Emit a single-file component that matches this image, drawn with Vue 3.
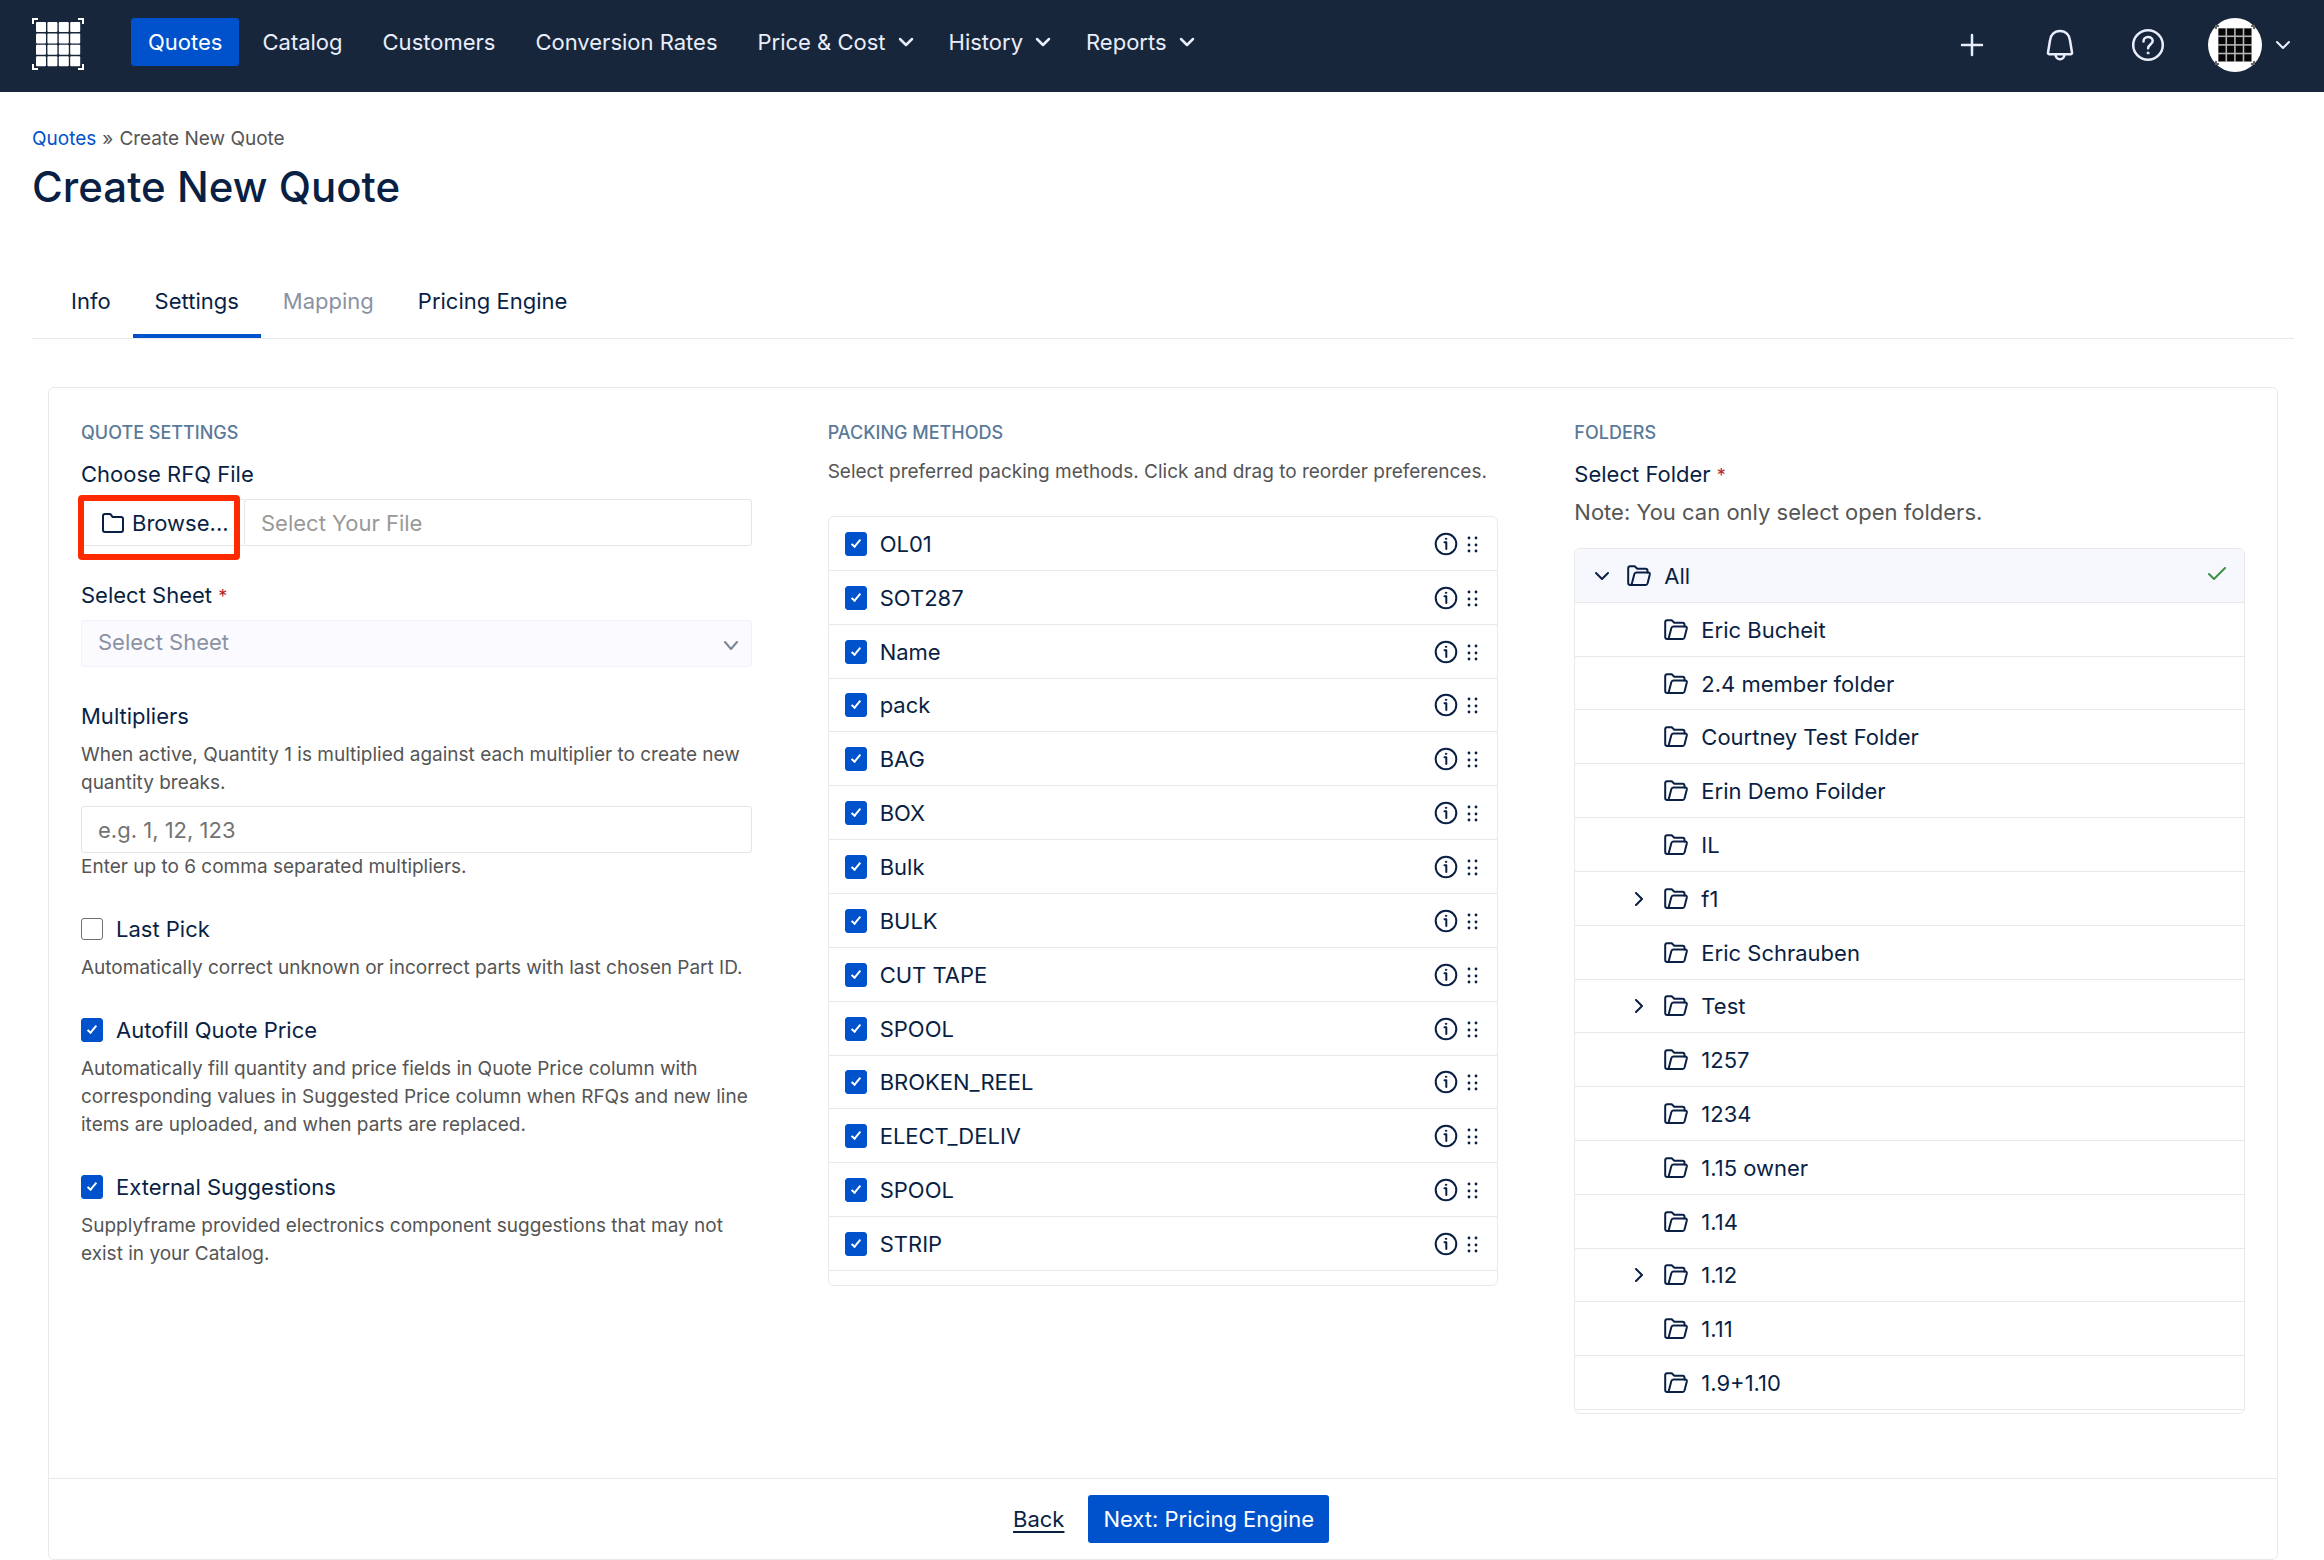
<script setup>
import { ref } from 'vue'

const navLinks = [
  { label: 'Quotes', active: true },
  { label: 'Catalog' },
  { label: 'Customers' },
  { label: 'Conversion Rates' },
  { label: 'Price & Cost', menu: true },
  { label: 'History', menu: true },
  { label: 'Reports', menu: true },
]

const tabs = [
  { label: 'Info' },
  { label: 'Settings', active: true },
  { label: 'Mapping', disabled: true },
  { label: 'Pricing Engine' },
]

const options = ref([
  {
    id: 'last-pick',
    label: 'Last Pick',
    checked: false,
    help: 'Automatically correct unknown or incorrect parts with last chosen Part ID.',
  },
  {
    id: 'autofill',
    label: 'Autofill Quote Price',
    checked: true,
    help: 'Automatically fill quantity and price fields in Quote Price column with corresponding values in Suggested Price column when RFQs and new line items are uploaded, and when parts are replaced.',
  },
  {
    id: 'external',
    label: 'External Suggestions',
    checked: true,
    help: 'Supplyframe provided electronics component suggestions that may not exist in your Catalog.',
  },
])

const packing = ref(
  [
    'OL01', 'SOT287', 'Name', 'pack', 'BAG', 'BOX', 'Bulk', 'BULK', 'CUT TAPE',
    'SPOOL', 'BROKEN_REEL', 'ELECT_DELIV', 'SPOOL', 'STRIP',
  ].map((name) => ({ name, checked: true }))
)

const folders = [
  { name: 'Eric Bucheit' },
  { name: '2.4 member folder' },
  { name: 'Courtney Test Folder' },
  { name: 'Erin Demo Foilder' },
  { name: 'IL' },
  { name: 'f1', expandable: true },
  { name: 'Eric Schrauben' },
  { name: 'Test', expandable: true },
  { name: '1257' },
  { name: '1234' },
  { name: '1.15 owner' },
  { name: '1.14' },
  { name: '1.12', expandable: true },
  { name: '1.11' },
  { name: '1.9+1.10' },
]

const cells = [0, 1, 2, 3]
</script>

<template>
  <div class="app">
    <header class="topbar">
      <a class="logo" href="#" aria-label="Home">
        <svg width="52" height="52" viewBox="0 0 52 52">
          <g fill="#fff">
            <template v-for="r in cells" :key="r">
              <rect v-for="c in cells" :key="c" :x="4 + c * 11.4" :y="4 + r * 11.4" width="10" height="10" rx="1" />
            </template>
          </g>
          <g fill="none" stroke="#fff" stroke-width="2">
            <path d="M1 6V1h5M46 1h5v5M51 46v5h-5M6 51H1v-5" />
          </g>
        </svg>
      </a>
      <nav class="nav">
        <a v-for="l in navLinks" :key="l.label" href="#" :class="['nav-link', { active: l.active, 'has-menu': l.menu }]">
          {{ l.label }}
          <svg v-if="l.menu" width="16" height="10" viewBox="0 0 16 10" class="line-icon bold">
            <path d="M2 2l6 6 6-6" />
          </svg>
        </a>
      </nav>
      <div class="tools">
        <button type="button" class="tool" aria-label="Add">
          <svg width="32" height="34" viewBox="0 0 32 34" class="line-icon bold"><path d="M16 7v20M6 17h20" /></svg>
        </button>
        <button type="button" class="tool" aria-label="Notifications">
          <svg width="32" height="34" viewBox="0 0 32 34" class="line-icon bold">
            <path d="M16 3c-5.600 0-9.600 4-10 9.500L4 24.500c-.1 1 .4 1.700 1.400 1.700h21.200c1 0 1.500-.7 1.400-1.700l-2-12C25.600 7 21.600 3 16 3z" />
            <path d="M11.500 26.500c.3 3 2 4.700 4.500 4.700s4.200-1.700 4.500-4.700" />
          </svg>
        </button>
        <button type="button" class="tool" aria-label="Help">
          <svg width="32" height="34" viewBox="0 0 32 34" class="line-icon bold">
            <circle cx="16" cy="17" r="14.800" />
            <path d="M11.500 13.500c0-2.700 2-4.500 4.600-4.500 2.700 0 4.600 1.700 4.600 4.100 0 3.400-4.600 3.600-4.600 7.200" />
            <circle cx="16" cy="25" r="1" fill="currentColor" stroke-width="1" />
          </svg>
        </button>
        <button type="button" class="account" aria-label="Account">
          <svg width="54" height="54" viewBox="0 0 54 54">
            <circle cx="27" cy="27" r="27" fill="#fff" />
            <rect x="10" y="10" width="34" height="34" fill="#b5b5b5" />
            <template v-for="r in cells" :key="r">
              <rect v-for="c in cells" :key="c" :x="10.500 + c * 8.600" :y="10.500 + r * 8.600" width="7" height="7" fill="#050505" />
            </template>
            <path d="M8 11V8h3M43 8h3v3M46 43v3h-3M11 46H8v-3" fill="none" stroke="#666" stroke-width="2" />
          </svg>
          <svg width="14" height="10" viewBox="0 0 14 10" class="line-icon"><path d="M1 2l6 6 6-6" /></svg>
        </button>
      </div>
    </header>

    <main class="page">
      <nav class="breadcrumb" aria-label="Breadcrumb">
        <a href="#">Quotes</a><span>»</span><span>Create New Quote</span>
      </nav>
      <h1>Create New Quote</h1>

      <div class="tabs" role="tablist">
        <button
          v-for="t in tabs"
          :key="t.label"
          type="button"
          role="tab"
          :disabled="t.disabled"
          :aria-selected="!!t.active"
          :class="['tab', { active: t.active }]"
        >{{ t.label }}</button>
      </div>

      <form class="card" @submit.prevent>
        <div class="columns">
          <section>
            <h2>Quote Settings</h2>
            <div class="fields">
              <div class="field">
                <label for="rfq-file" class="label">Choose RFQ File</label>
                <div class="file-row">
                  <button type="button" class="browse">
                    <svg width="22" height="20" viewBox="0 0 22 20" class="line-icon">
                      <path d="M1 3.200C1 2 1.800 1 3 1h4.500c.7 0 1.200.3 1.600.9L10.500 4H19c1.200 0 2 .9 2 2v10.800c0 1.200-.8 2.200-2 2.200H3c-1.200 0-2-1-2-2.200z" />
                    </svg>
                    Browse...
                  </button>
                  <input id="rfq-file" type="text" class="input file-name" placeholder="Select Your File" readonly />
                  <span class="highlight" aria-hidden="true"></span>
                </div>
              </div>

              <div class="field">
                <label for="sheet" class="label">Select Sheet <span class="required">*</span></label>
                <div class="select-wrap">
                  <select id="sheet" class="input select" disabled>
                    <option>Select Sheet</option>
                  </select>
                  <svg width="14" height="10" viewBox="0 0 14 10" class="line-icon select-arrow"><path d="M1 1l6 7 6-7" /></svg>
                </div>
              </div>

              <div class="field">
                <label for="multipliers" class="label">Multipliers</label>
                <p class="help">When active, Quantity 1 is multiplied against each multiplier to create new quantity breaks.</p>
                <div>
                  <input id="multipliers" type="text" class="input" placeholder="e.g. 1, 12, 123" />
                  <p class="help">Enter up to 6 comma separated multipliers.</p>
                </div>
              </div>
            </div>

            <div class="options">
              <div v-for="o in options" :key="o.id" class="field">
                <label class="check-label">
                  <input v-model="o.checked" type="checkbox" class="check" />
                  {{ o.label }}
                </label>
                <p class="help">{{ o.help }}</p>
              </div>
            </div>
          </section>

          <section>
            <h2>Packing Methods</h2>
            <p class="help">Select preferred packing methods. Click and drag to reorder preferences.</p>
            <div class="list packing">
              <ul class="rows">
                <li v-for="(p, i) in packing" :key="i" class="row">
                  <label class="check-label">
                    <input v-model="p.checked" type="checkbox" class="check" />
                    {{ p.name }}
                  </label>
                  <button type="button" class="icon-button" :aria-label="'About ' + p.name">
                    <svg width="24" height="24" viewBox="0 0 24 24" class="line-icon">
                      <circle cx="12" cy="12" r="10.300" />
                      <path d="M10.500 10.200H12.300V17" />
                      <circle cx="12" cy="6.800" r=".7" fill="currentColor" stroke-width="1" />
                    </svg>
                  </button>
                  <svg width="12" height="18" viewBox="0 0 12 18" class="grip">
                    <template v-for="y in [3, 10, 16]" :key="y">
                      <circle cx="2" :cy="y" r="1.400" /><circle cx="9" :cy="y" r="1.400" />
                    </template>
                  </svg>
                </li>
              </ul>
            </div>
          </section>

          <section>
            <h2>Folders</h2>
            <div class="label">Select Folder <span class="required">*</span></div>
            <p class="note">Note: You can only select open folders.</p>
            <div class="list tree">
              <ul class="rows">
                <li class="row root">
                  <button type="button" class="toggle" aria-label="Collapse All">
                    <svg width="14" height="10" viewBox="0 0 14 10" class="line-icon"><path d="M1 2l6 6 6-6" /></svg>
                  </button>
                  <svg width="24" height="22" viewBox="0 0 24 22" class="line-icon folder">
                    <path d="M4.500 20H3.200C2 20 1.200 19.200 1.200 18V3.200c0-1.200.8-2 2-2h4.500l2.600 2.600h8.200c1.200 0 2 .8 2 2v1.700" />
                    <path d="M4.500 20L7.300 9.300c.3-1.100.9-1.800 2-1.800h12c1.200 0 1.700.9 1.500 1.900L20.600 18.300c-.3 1.100-.9 1.700-2 1.700z" />
                  </svg>
                  <span class="name">All</span>
                  <svg width="18" height="18" viewBox="0 0 18 18" class="line-icon selected"><path d="M1 7l5 5L17 1" /></svg>
                </li>
                <li v-for="f in folders" :key="f.name" class="row child">
                  <button v-if="f.expandable" type="button" class="toggle" :aria-label="'Expand ' + f.name">
                    <svg width="10" height="14" viewBox="0 0 10 14" class="line-icon"><path d="M2 1l6 6-6 6" /></svg>
                  </button>
                  <span v-else class="toggle"></span>
                  <svg width="24" height="22" viewBox="0 0 24 22" class="line-icon folder">
                    <path d="M4.500 20H3.200C2 20 1.200 19.200 1.200 18V3.200c0-1.200.8-2 2-2h4.500l2.600 2.600h8.200c1.200 0 2 .8 2 2v1.700" />
                    <path d="M4.500 20L7.300 9.300c.3-1.100.9-1.800 2-1.800h12c1.200 0 1.700.9 1.500 1.900L20.600 18.300c-.3 1.100-.9 1.700-2 1.700z" />
                  </svg>
                  <span class="name">{{ f.name }}</span>
                </li>
              </ul>
            </div>
          </section>
        </div>

        <footer class="actions">
          <a href="#" class="back">Back</a>
          <button type="submit" class="primary">Next: Pricing Engine</button>
        </footer>
      </form>
    </main>
  </div>
</template>

<style>
body {
  margin: 0;
  background: #fff;
}
</style>

<style scoped>
.app {
  font-family: Inter, "Liberation Sans", sans-serif;
  font-size: 22px;
  line-height: 32px;
  color: #0a1f44;
}
.app *,
.app *::before {
  box-sizing: border-box;
}
button,
input,
select {
  font: inherit;
  color: inherit;
  margin: 0;
}
button {
  padding: 0;
  border: 0;
  background: none;
}
ul,
h1,
h2,
p {
  margin: 0;
  padding: 0;
}
svg {
  display: block;
  flex: none;
}
.line-icon {
  fill: none;
  stroke: currentColor;
  stroke-width: 2;
  stroke-linecap: round;
  stroke-linejoin: round;
}
.bold {
  stroke-width: 2.5;
}

/* top bar */
.topbar {
  display: flex;
  align-items: flex-start;
  height: 92px;
  padding: 18px 34px 0 32px;
  background: #18263c;
  color: #e8eefb;
}
.logo {
  margin-right: 47px;
}
.nav {
  display: flex;
  gap: 6px;
}
.nav-link {
  display: flex;
  align-items: center;
  gap: 12px;
  height: 48px;
  padding: 0 17px;
  border-radius: 3px;
  color: inherit;
  text-decoration: none;
  white-space: nowrap;
}
.nav-link.has-menu {
  padding-right: 12px;
}
.nav-link.active {
  background: #0052cc;
  color: #fff;
}
.tools {
  display: flex;
  align-items: center;
  gap: 56px;
  height: 54px;
  margin-left: auto;
}
.account {
  display: flex;
  align-items: center;
  gap: 14px;
  margin-left: -12px;
}

/* page head */
.page {
  padding: 31px 30px 0 32px;
}
.breadcrumb {
  display: flex;
  gap: 6px;
  font-size: 19px;
  color: #555;
}
.breadcrumb a {
  color: #0052cc;
  text-decoration: none;
}
h1 {
  margin-top: 4px;
  font-size: 42px;
  line-height: 56px;
  font-weight: 500;
}
.tabs {
  display: flex;
  margin-top: 58px;
  padding-left: 17px;
  border-bottom: 1px solid #e8e9eb;
}
.tab {
  height: 65px;
  padding: 0 22px 6px;
  border-bottom: 4px solid transparent;
}
.tab.active {
  border-color: #0052cc;
}
.tab:disabled {
  color: #8a92a3;
}

/* card */
.card {
  margin: 48px 16px 0;
  border: 1px solid #e8e9eb;
  border-radius: 6px;
}
.columns {
  display: grid;
  grid-template-columns: repeat(3, minmax(0, 1fr));
  gap: 76px;
  padding: 32px 32px 64px;
}
h2 {
  margin-bottom: 12px;
  font-size: 18px;
  line-height: 26px;
  font-weight: 500;
  color: #5b7a99;
  text-transform: uppercase;
}
.label {
  display: block;
}
.required {
  font-size: 18px;
  line-height: 1;
  color: #b3262b;
}
.help {
  font-size: 19px;
  line-height: 28px;
  color: #555;
}
.note {
  margin-top: 6px;
  color: #555;
}
.fields {
  display: flex;
  flex-direction: column;
  gap: 33px;
}
.field {
  display: flex;
  flex-direction: column;
  gap: 9px;
}
.options {
  display: flex;
  flex-direction: column;
  gap: 32px;
  margin-top: 32px;
}
.input {
  display: block;
  width: 100%;
  height: 47px;
  padding: 0 16px;
  border: 1px solid #e4e5e8;
  border-radius: 3px;
  background: #fff;
}
.input::placeholder {
  color: #737373;
  opacity: 1;
}
.file-row {
  position: relative;
  display: flex;
}
.browse {
  display: flex;
  align-items: center;
  gap: 8px;
  width: 163px;
  padding-left: 20px;
  border: 1px solid #e4e5e8;
  border-right: 0;
  border-radius: 3px 0 0 3px;
}
.file-name {
  flex: 1;
  width: auto;
}
.file-name::placeholder {
  color: #999;
}
.highlight {
  position: absolute;
  top: -4px;
  left: -3px;
  width: 162px;
  height: 65px;
  border: 6px solid #ff2a00;
  border-radius: 4px;
}
.select-wrap {
  position: relative;
}
.input.select {
  appearance: none;
  padding-bottom: 4px;
  border-color: #f1f1f7;
  background: #fafaff;
  color: #8a92a3;
  opacity: 1;
}
.select-arrow {
  position: absolute;
  top: 21px;
  right: 14px;
  color: #7c8596;
}
.check-label {
  display: flex;
  align-items: center;
  gap: 13px;
}
.check {
  appearance: none;
  flex: none;
  width: 22px;
  height: 22px;
  border: 1px solid #6b6f76;
  border-radius: 3px;
  background: #fff;
}
.check:checked {
  display: grid;
  place-items: center;
  height: 24px;
  border-color: #0052cc;
  background: #0052cc;
}
.check:checked::before {
  content: "";
  width: 10px;
  height: 5px;
  margin-bottom: 3px;
  border: solid #fff;
  border-width: 0 0 2px 2px;
  transform: rotate(-50deg);
}

/* lists */
.list {
  overflow: hidden;
  border: 1px solid #e8e9eb;
  border-radius: 6px;
}
.packing {
  height: 770px;
  margin-top: 30px;
}
.tree {
  height: 866px;
  margin-top: 20px;
}
.rows {
  display: grid;
  grid-auto-rows: 1fr;
  list-style: none;
}
.packing .rows {
  height: 754px;
}
.tree .rows {
  height: 861px;
}
.row {
  display: flex;
  align-items: center;
  padding-top: 1px;
  border-bottom: 1px solid #e8e9eb;
}
.packing .row {
  gap: 9px;
  padding-right: 18px;
  padding-left: 16px;
}
.packing .check-label {
  flex: 1;
}
.grip {
  fill: #0a1f44;
}
.tree .row {
  padding-right: 18px;
  padding-left: 20px;
}
.tree .root {
  background: #f6f8fd;
}
.tree .child {
  padding-left: 57px;
}
.toggle {
  display: flex;
  justify-content: center;
  width: 14px;
}
.folder {
  margin: 0 13px 0 18px;
}
.name {
  flex: 1;
}
.selected {
  color: #3f8f45;
}

/* footer */
.actions {
  display: flex;
  justify-content: center;
  align-items: center;
  gap: 24px;
  padding: 16px 0;
  border-top: 1px solid #e8e9eb;
}
.back {
  margin-left: 16px;
  color: inherit;
  text-underline-offset: 4px;
}
.primary {
  height: 48px;
  padding: 0 15px;
  border-radius: 3px;
  background: #0052cc;
  color: #fff;
}
</style>
